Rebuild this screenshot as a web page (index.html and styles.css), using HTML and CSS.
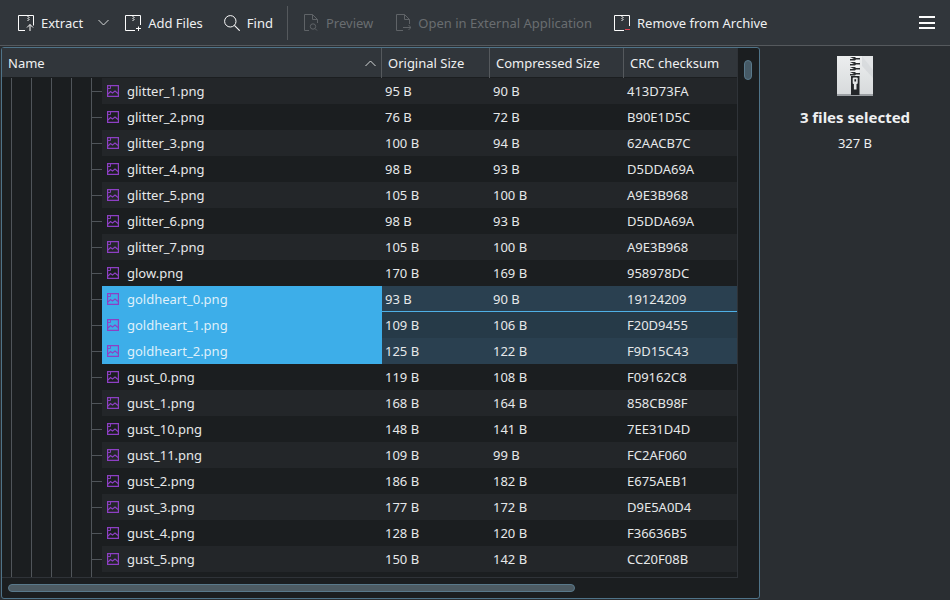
FILE: index.html
```html
<!DOCTYPE html>
<html lang="en">
<head>
<meta charset="utf-8">
<title>Ark</title>
<link rel="stylesheet" href="styles.css">
</head>
<body>
<svg class="defs" width="0" height="0" aria-hidden="true">
  <symbol id="img" viewBox="0 0 12 12">
    <path d="M.6.6h10.800v10.800H.6z" fill="none" stroke="#8d3fc4" stroke-width="1.200"/>
    <path d="M1 9 3.500 6.500l2 1.500L8 6l3 2.500" fill="none" stroke="#8d3fc4" stroke-width="1.100"/>
    <path d="M1 3.500h2.500V1" fill="none" stroke="#8d3fc4" stroke-width=".9"/>
  </symbol>
</svg>
<header class="toolbar">
  <div class="tool tool-extract">
    <svg class="icon" width="16" height="16" viewBox="0 0 16 16"><path d="M7 15.500H.5V.5h15v10" fill="none" stroke="#fcfcfc"/><path d="M9.500 1.500h1m0 1h1m-2 1h1m0 1h1m-2 1h1" fill="none" stroke="#fcfcfc"/><path d="M12 16v-6.500M9 12.500l3-3 3 3" fill="none" stroke="#fcfcfc"/></svg>
    <span>Extract</span>
  </div>
  <svg class="chevron" width="11" height="7" viewBox="0 0 11 7"><path d="M.5 1 5.500 6l5-5" fill="none" stroke="#d5d7d8"/></svg>
  <div class="tool tool-add">
    <svg class="icon" width="16" height="16" viewBox="0 0 16 16"><path d="M10 15.500H.5V.5h15V10" fill="none" stroke="#fcfcfc"/><path d="M7.500 1.500h1m0 1h1m-2 1h1m0 1h1m-2 1h1" fill="none" stroke="#fcfcfc"/><path d="M13.500 11.500v5M11 13.500h5" fill="none" stroke="#fcfcfc"/></svg>
    <span>Add Files</span>
  </div>
  <div class="tool tool-find">
    <svg class="icon" width="16" height="16" viewBox="0 0 16 16"><circle cx="6.300" cy="6.300" r="5.700" fill="none" stroke="#fcfcfc"/><path d="m10.400 10.400 5.300 5.300" fill="none" stroke="#fcfcfc" stroke-width="1.100"/></svg>
    <span>Find</span>
  </div>
  <div class="sep"></div>
  <div class="tool tool-preview disabled">
    <svg class="icon" width="15" height="17" viewBox="0 0 15 17"><path d="M5 16.500H.5V.5h8l5 5V9M8.500.5v5h5" fill="none" stroke="#5f6367"/><circle cx="9" cy="12.500" r="2.700" fill="none" stroke="#5f6367"/><path d="m11 14.500 2 2" stroke="#5f6367"/></svg>
    <span>Preview</span>
  </div>
  <div class="tool tool-open disabled">
    <svg class="icon" width="15" height="17" viewBox="0 0 15 17"><path d="M7 16.500H.5V.5h8l5 5V10M8.500.5v5h5" fill="none" stroke="#5f6367"/><path d="M7 13.500h8M12.500 11l2.500 2.500-2.500 2.500" fill="none" stroke="#5f6367"/></svg>
    <span>Open in External Application</span>
  </div>
  <div class="tool tool-remove">
    <svg class="icon" width="16" height="16" viewBox="0 0 16 16"><path d="M10 15.500H.5V.5h15V11" fill="none" stroke="#fcfcfc"/><path d="M7.500 1.500h1m0 1h1m-2 1h1m0 1h1m-2 1h1" fill="none" stroke="#fcfcfc"/><path d="M11 14.500h5" stroke="#da4453"/></svg>
    <span>Remove from Archive</span>
  </div>
  <div class="menu"><i></i><i></i><i></i></div>
</header>
<main class="content">
  <section class="frame">
    <div class="view">
      <div class="table">
        <div class="head">
          <div class="hcell hname"><span>Name</span><svg width="11" height="7" viewBox="0 0 11 7"><path d="M.5 6l5-5 5 5" fill="none" stroke="#d5d7d8"/></svg></div>
          <div class="hcell">Original Size</div>
          <div class="hcell">Compressed Size</div>
          <div class="hcell hlast">CRC checksum</div>
        </div>
        <div class="rows" id="rows">
          <div class="row"><div class="gutter"></div><div class="cell name"><svg class="fi"><use href="#img"/></svg>glitter_1.png</div><div class="cell">95 B</div><div class="cell">90 B</div><div class="cell">413D73FA</div></div>
          <div class="row"><div class="gutter"></div><div class="cell name"><svg class="fi"><use href="#img"/></svg>glitter_2.png</div><div class="cell">76 B</div><div class="cell">72 B</div><div class="cell">B90E1D5C</div></div>
          <div class="row"><div class="gutter"></div><div class="cell name"><svg class="fi"><use href="#img"/></svg>glitter_3.png</div><div class="cell">100 B</div><div class="cell">94 B</div><div class="cell">62AACB7C</div></div>
          <div class="row"><div class="gutter"></div><div class="cell name"><svg class="fi"><use href="#img"/></svg>glitter_4.png</div><div class="cell">98 B</div><div class="cell">93 B</div><div class="cell">D5DDA69A</div></div>
          <div class="row"><div class="gutter"></div><div class="cell name"><svg class="fi"><use href="#img"/></svg>glitter_5.png</div><div class="cell">105 B</div><div class="cell">100 B</div><div class="cell">A9E3B968</div></div>
          <div class="row"><div class="gutter"></div><div class="cell name"><svg class="fi"><use href="#img"/></svg>glitter_6.png</div><div class="cell">98 B</div><div class="cell">93 B</div><div class="cell">D5DDA69A</div></div>
          <div class="row"><div class="gutter"></div><div class="cell name"><svg class="fi"><use href="#img"/></svg>glitter_7.png</div><div class="cell">105 B</div><div class="cell">100 B</div><div class="cell">A9E3B968</div></div>
          <div class="row"><div class="gutter"></div><div class="cell name"><svg class="fi"><use href="#img"/></svg>glow.png</div><div class="cell">170 B</div><div class="cell">169 B</div><div class="cell">958978DC</div></div>
          <div class="row sel current"><div class="gutter"></div><div class="cell name"><svg class="fi"><use href="#img"/></svg>goldheart_0.png</div><div class="cell">93 B</div><div class="cell">90 B</div><div class="cell">19124209</div></div>
          <div class="row sel"><div class="gutter"></div><div class="cell name"><svg class="fi"><use href="#img"/></svg>goldheart_1.png</div><div class="cell">109 B</div><div class="cell">106 B</div><div class="cell">F20D9455</div></div>
          <div class="row sel"><div class="gutter"></div><div class="cell name"><svg class="fi"><use href="#img"/></svg>goldheart_2.png</div><div class="cell">125 B</div><div class="cell">122 B</div><div class="cell">F9D15C43</div></div>
          <div class="row"><div class="gutter"></div><div class="cell name"><svg class="fi"><use href="#img"/></svg>gust_0.png</div><div class="cell">119 B</div><div class="cell">108 B</div><div class="cell">F09162C8</div></div>
          <div class="row"><div class="gutter"></div><div class="cell name"><svg class="fi"><use href="#img"/></svg>gust_1.png</div><div class="cell">168 B</div><div class="cell">164 B</div><div class="cell">858CB98F</div></div>
          <div class="row"><div class="gutter"></div><div class="cell name"><svg class="fi"><use href="#img"/></svg>gust_10.png</div><div class="cell">148 B</div><div class="cell">141 B</div><div class="cell">7EE31D4D</div></div>
          <div class="row"><div class="gutter"></div><div class="cell name"><svg class="fi"><use href="#img"/></svg>gust_11.png</div><div class="cell">109 B</div><div class="cell">99 B</div><div class="cell">FC2AF060</div></div>
          <div class="row"><div class="gutter"></div><div class="cell name"><svg class="fi"><use href="#img"/></svg>gust_2.png</div><div class="cell">186 B</div><div class="cell">182 B</div><div class="cell">E675AEB1</div></div>
          <div class="row"><div class="gutter"></div><div class="cell name"><svg class="fi"><use href="#img"/></svg>gust_3.png</div><div class="cell">177 B</div><div class="cell">172 B</div><div class="cell">D9E5A0D4</div></div>
          <div class="row"><div class="gutter"></div><div class="cell name"><svg class="fi"><use href="#img"/></svg>gust_4.png</div><div class="cell">128 B</div><div class="cell">120 B</div><div class="cell">F36636B5</div></div>
          <div class="row"><div class="gutter"></div><div class="cell name"><svg class="fi"><use href="#img"/></svg>gust_5.png</div><div class="cell">150 B</div><div class="cell">142 B</div><div class="cell">CC20F08B</div></div>
        </div>
      </div>
      <div class="vbar"><div class="vhandle"></div></div>
    </div>
    <div class="hbar"><div class="hhandle"></div></div>
  </section>
  <aside class="info">
    <svg class="zip" width="36" height="40" viewBox="0 0 36 40">
      <defs><linearGradient id="zg" x1="0" y1="0" x2="0" y2="1"><stop offset="0" stop-color="#eceeef"/><stop offset="1" stop-color="#d6d9db"/></linearGradient></defs>
      <rect width="36" height="40" fill="url(#zg)"/>
      <path d="M25 0h11v14z" fill="#e2e4e6"/>
      <path d="M25 0l11 14v8L25 10z" fill="#cfd2d5" opacity=".6"/>
      <rect y="38" width="36" height="2" fill="#9a9ea2"/>
      <path d="M14 0h8v20h-8z" fill="#fff" opacity=".45"/>
      <path d="M14 20h8.500v19h-8.500z" fill="#232629"/>
      <path d="M13 1h5l1 1h4v1.500h-4l-1 1h-5V3h4zM13 6h5l1 1h4v1.500h-4l-1 1h-5V8h4zM13 11h5l1 1h4v1.500h-4l-1 1h-5V13h4zM13 16h5l1 1h4v1.500h-4l-1 1h-5V18h4z" fill="#2c2f32"/>
      <rect x="15.700" y="21.500" width="5" height="6.500" rx="1" fill="#e4e6e7"/>
      <rect x="17.400" y="23.200" width="1.700" height="2.300" fill="#232629"/>
      <rect x="16.900" y="28" width="2.600" height="5.500" fill="#e4e6e7"/>
    </svg>
    <h2 class="count">3 files selected</h2>
    <p class="size">327 B</p>
  </aside>
</main>
</body>
</html>
```
FILE: styles.css
```css
* { box-sizing: border-box; }
html, body { margin: 0; height: 100%; }
body {
  width: 950px; height: 600px; overflow: hidden;
  display: flex; flex-direction: column;
  background: #2a2e32; color: #fcfcfc;
  font: 13px/18px "Noto Sans", sans-serif;
}
.defs { position: absolute; }

.toolbar {
  height: 46px; flex: none;
  display: flex; align-items: center;
  padding-left: 18px;
  background: #31363b;
  border-bottom: 1px solid #55595d;
}
.tool { display: flex; align-items: center; gap: 7px; white-space: nowrap; color: #eff0f1; }
.tool .icon { flex: none; }
.tool.disabled { color: #696d70; }
.chevron { margin-left: 15px; }
.tool-add { margin-left: 16px; }
.tool-find { margin-left: 21px; }
.sep { width: 1px; height: 34px; background: #55595d; margin-left: 14px; }
.tool-preview { margin-left: 16px; }
.tool-open { margin-left: 23px; }
.tool-remove { margin-left: 22px; }
.menu { margin-left: auto; margin-right: 15px; width: 16px; display: flex; flex-direction: column; gap: 3.500px; }
.menu i { display: block; height: 2px; background: #fcfcfc; }

.content { flex: 1; display: flex; min-height: 0; }
.frame {
  width: 759px; height: 552px; margin: 1px 0 0 1px;
  border: 1px solid #4f7388; border-radius: 3px;
  background: #1b1e20;
  display: flex; flex-direction: column;
}
.view { height: 530px; display: flex; flex: none; }
.table {
  width: 736px; height: 530px;
  border-right: 1px solid #2f3338; border-bottom: 1px solid #2f3338;
  display: flex; flex-direction: column;
  background:
    repeating-linear-gradient(90deg, #1b1e20 0 9px, #50555a 9px 10px, #1b1e20 10px 20px) 0 0 / 100px 100% no-repeat;
}
.head {
  height: 30px; flex: none;
  display: grid; grid-template-columns: 380px 108px 134px 1fr;
  background: #31363b;
  border-bottom: 1px solid #1b1e20;
}
.hcell {
  padding: 1px 0 0 6px; line-height: 29px;
  border-right: 1px solid #55595d;
  color: #eff0f1;
}
.hlast { border-right: 0; }
.hname { display: flex; align-items: center; justify-content: space-between; padding-right: 5px; }
.rows { display: flex; flex-direction: column; }
.row {
  height: 26px; flex: none;
  display: grid; grid-template-columns: 100px 280px 108px 134px 1fr;
  line-height: 26px;
}
.row:nth-child(odd) .cell { background: #232629; }
.row:nth-child(even) .cell { background: #1b1e20; }
.gutter { background: linear-gradient(#50555a, #50555a) 89px 13px / 11px 1px no-repeat; }
.cell { padding-left: 3px; color: #e6e8e9; white-space: nowrap; }
.name { padding-left: 5px; display: flex; align-items: center; gap: 8px; color: #e6e8e9; }
.fi { width: 12px; height: 12px; flex: none; }
.row.sel .cell { background: #2a4050; }
.row.sel:nth-child(even) .cell { background: #263a48; }
.row.sel .cell.name { background: #3daee9; color: #dff0fa; }
.row.current .cell:not(.name) { box-shadow: inset 0 -1px 0 #4fb0e6; }

.vbar { width: 21px; flex: none; padding: 12px 0 0 6px; }
.vhandle { width: 8px; height: 20px; border-radius: 4px; background: #465a66; border: 1px solid #59798b; }
.hbar { flex: 1; padding: 6px 0 0 6px; }
.hhandle { width: 567px; height: 8px; border-radius: 4px; background: #4d5b63; border: 1px solid #59798b; }

.info { flex: 1; display: flex; flex-direction: column; align-items: center; padding-top: 10px; }
.zip { flex: none; }
.count { margin: 11px 0 0; font-size: 15px; line-height: 20px; font-weight: 700; color: #eff0f1; }
.size { margin: 7px 0 0; color: #eff0f1; line-height: 18px; }
```
